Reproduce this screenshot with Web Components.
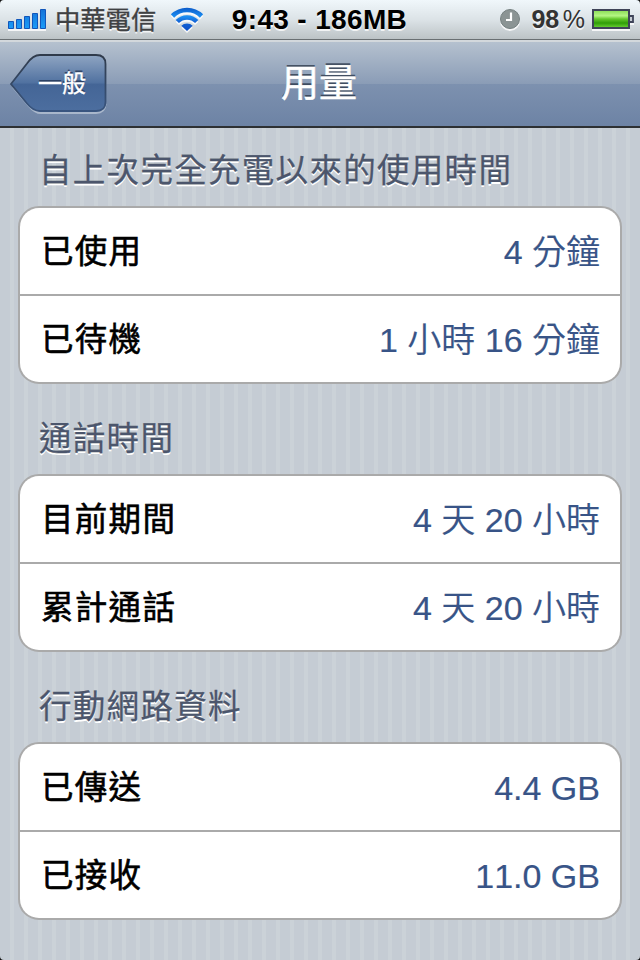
<!DOCTYPE html>
<html lang="zh-Hant">
<head>
<meta charset="utf-8">
<title>用量</title>
<style>
  html, body {
    margin: 0;
    height: 960px;
    overflow: hidden;
  }
  body {
    font-family: "Liberation Sans", "Noto Sans CJK TC", sans-serif;
  }
</style>
</head>
<body>
<usage-screen>
  <status-bar slot="top" carrier="中華電信" time="9:43 - 186MB" battery="98"></status-bar>
  <nav-bar slot="top">
    <back-button slot="back">一般</back-button>
    用量
  </nav-bar>
  <settings-group heading="自上次完全充電以來的使用時間">
    <settings-row label="已使用">4 分鐘</settings-row>
    <settings-row label="已待機">1 小時 16 分鐘</settings-row>
  </settings-group>
  <settings-group heading="通話時間">
    <settings-row label="目前期間">4 天 20 小時</settings-row>
    <settings-row label="累計通話">4 天 20 小時</settings-row>
  </settings-group>
  <settings-group heading="行動網路資料">
    <settings-row label="已傳送">4.4 GB</settings-row>
    <settings-row label="已接收">11.0 GB</settings-row>
  </settings-group>
</usage-screen>

<script>
class UsageScreen extends HTMLElement {
  constructor(){
    super();
    this._root = this.attachShadow({mode: 'open'});
  }

  connectedCallback(){
    this._root.innerHTML = `
    <style>
      :host {
        display: flex;
        flex-direction: column;
        position: relative;
        width: 640px;
        height: 960px;
        overflow: hidden;
        background: repeating-linear-gradient(90deg, #c5ccd4 0 10px, #cbd2d8 10px 14px);
      }
      main {
        display: flex;
        flex-direction: column;
        gap: 12px;
        padding: 0 18px;
      }
      /* rounded screen corners */
      .corners {
        position: absolute;
        inset: 0;
        pointer-events: none;
      }
    </style>
    <slot name="top"></slot>
    <main><slot></slot></main>
    <svg class="corners" width="640" height="960" viewBox="0 0 640 960">
      <path fill="#111" d="M0 0h4Q0 0 0 4zM640 0h-4Q640 0 640 4zM0 960h4Q0 960 0 956zM640 960h-4Q640 960 640 956z"/>
    </svg>`;
  }
}

class StatusBar extends HTMLElement {
  constructor(){
    super();
    this._root = this.attachShadow({mode: 'open'});
  }

  connectedCallback(){
    this._root.innerHTML = `
    <style>
      :host {
        display: grid;
        grid-template-columns: 1fr auto 1fr;
        align-items: center;
        box-sizing: border-box;
        height: 40px;
        padding: 0 6px 0 8px;
        border-bottom: 1px solid #6a7073;
        background: linear-gradient(#f0f7fb, #dce3e7 50%, #bcc3c6);
        text-shadow: 0 2px 0 rgba(255, 255, 255, .75);
        white-space: nowrap;
      }
      .left, .right {
        display: flex;
        align-items: center;
      }
      .right {
        justify-content: flex-end;
      }
      svg {
        display: block;
        flex: none;
      }
      .carrier {
        margin: 0 14px 0 8px;
        font-size: 25.3px;
        line-height: 36px;
        color: #3f4143;
        -webkit-text-stroke: .4px #3f4143;
      }
      .time {
        margin-right: 3px;
        font-size: 28px;
        font-weight: bold;
        letter-spacing: .35px;
        color: #000;
      }
      .battery {
        margin: 0 7px 0 12px;
        font-size: 25px;
        color: #333;
      }
      .battery b {
        margin-right: 4px;
        letter-spacing: -.3px;
      }
    </style>
    <div class="left">
      <svg width="39" height="24" viewBox="0 0 39 24">
        <defs>
          <linearGradient id="bar" x2="0" y2="1">
            <stop offset="0" stop-color="#1673d8"/>
            <stop offset="1" stop-color="#1a9cf8"/>
          </linearGradient>
        </defs>
        <path fill="#fff" opacity=".8" d="M0 21h38v2H0z"/>
        <g fill="url(#bar)" stroke="#1156ba">
          <path d="M.5 13.500h5v7h-5zM8.500 11.500h5v9h-5zM16.500 8.500h5v12h-5zM24.500 5.500h5v15h-5zM32.500 1.500h5v19h-5z"/>
        </g>
      </svg>
      <span class="carrier">${this.getAttribute('carrier')}</span>
      <svg width="34" height="26" viewBox="0 0 34 26">
        <defs>
          <linearGradient id="wifi" gradientUnits="userSpaceOnUse" x1="0" y1="0" x2="0" y2="24">
            <stop offset="0" stop-color="#0b57c6"/>
            <stop offset=".4" stop-color="#1b8ef2"/>
            <stop offset=".6" stop-color="#1467d8"/>
            <stop offset="1" stop-color="#0a4ec6"/>
          </linearGradient>
          <g id="waves">
            <path fill="none" stroke-width="4.600" d="M2.500 9a20.500 20.500 0 0 1 29 0M7.300 14.500a13.700 13.700 0 0 1 19.400 0"/>
            <path stroke="none" d="M11.300 18.800a8 8 0 0 1 11.400 0L17 24z"/>
          </g>
        </defs>
        <use href="#waves" y="2" stroke="#fff" fill="#fff" opacity=".8"/>
        <use href="#waves" stroke="url(#wifi)" fill="url(#wifi)"/>
      </svg>
    </div>
    <div class="time">${this.getAttribute('time')}</div>
    <div class="right">
      <svg width="20" height="22" viewBox="0 0 20 22">
        <circle cx="10" cy="12" r="10" fill="#fff" opacity=".8"/>
        <circle cx="10" cy="10" r="9.500" fill="#8b9494" stroke="#758080"/>
        <path fill="none" stroke="#fff" stroke-width="2.200" d="M11 3.500V11H6"/>
      </svg>
      <span class="battery"><b>${this.getAttribute('battery')}</b>%</span>
      <svg width="42" height="22" viewBox="0 0 42 22">
        <defs>
          <linearGradient id="charge" x2="0" y2="1">
            <stop offset="0" stop-color="#8fe05a"/>
            <stop offset=".3" stop-color="#b4f584"/>
            <stop offset=".5" stop-color="#64c72c"/>
            <stop offset=".75" stop-color="#2f9d08"/>
            <stop offset="1" stop-color="#62cb2e"/>
          </linearGradient>
        </defs>
        <path fill="#fff" opacity=".8" d="M0 20h38v2H0zM38 14h4v2h-4z"/>
        <rect x="1" y="1" width="36" height="18" fill="#a5e67c" stroke="#3e4358" stroke-width="2"/>
        <rect x="2" y="2" width="34" height="16" fill="url(#charge)"/>
        <path fill="#c5cbd2" stroke="#3e4358" stroke-width="1.800" d="M38 7h3v6h-3"/>
      </svg>
    </div>`;
  }
}

class NavBar extends HTMLElement {
  constructor(){
    super();
    this._root = this.attachShadow({mode: 'open'});
  }

  connectedCallback(){
    this._root.innerHTML = `
    <style>
      :host {
        display: grid;
        grid-template-columns: 1fr auto 1fr;
        align-items: center;
        box-sizing: border-box;
        height: 88px;
        padding: 0 10px;
        border-top: 2px solid #d3d8dc;
        border-bottom: 2px solid #2d3033;
        background: linear-gradient(#b5c1cf, #8a9cb6 50%, #7d91af 50%, #6d83a5);
      }
      .title {
        padding: 0 2px 3px 0;
        font-size: 38px;
        line-height: 50px;
        color: #fff;
        text-shadow: 0 -2px 0 rgba(40, 52, 70, .75);
        -webkit-text-stroke: .6px #fff;
      }
    </style>
    <slot name="back"></slot>
    <div class="title"><slot></slot></div>`;
  }
}

class BackButton extends HTMLElement {
  constructor(){
    super();
    this._root = this.attachShadow({mode: 'open'});
  }

  connectedCallback(){
    this._root.innerHTML = `
    <style>
      :host {
        display: grid;
        width: 97px;
        height: 60px;
      }
      svg, span {
        grid-area: 1 / 1;
      }
      span {
        padding-left: 28px;
        font-size: 24px;
        line-height: 60px;
        color: #fff;
        text-shadow: 0 -2px 0 rgba(30, 48, 80, .75);
        -webkit-text-stroke: .4px #fff;
      }
    </style>
    <svg width="97" height="60" viewBox="0 0 97 60">
      <defs>
        <linearGradient id="face" x2="0" y2="1">
          <stop offset="0" stop-color="#8fa5c2"/>
          <stop offset=".5" stop-color="#5071a0"/>
          <stop offset=".52" stop-color="#446596"/>
          <stop offset="1" stop-color="#4c6e9f"/>
        </linearGradient>
        <linearGradient id="edge" x2="0" y2="1">
          <stop offset="0" stop-color="#303b4b"/>
          <stop offset="1" stop-color="#39557f"/>
        </linearGradient>
      </defs>
      <path fill="none" stroke="#a9b7cb" stroke-width="2" d="M3 33L19 52Q25 59 31 59H86Q95 59 95.500 50"/>
      <path fill="url(#face)" stroke="url(#edge)" stroke-width="1.800" d="M1 30L17 9.500Q23 1 30 1H86Q95.500 1 95.500 10V48Q95.500 57 86 57H30Q23 57 17 49.500Z"/>
    </svg>
    <span><slot></slot></span>`;
  }
}

class SettingsGroup extends HTMLElement {
  constructor(){
    super();
    this._root = this.attachShadow({mode: 'open'});
  }

  connectedCallback(){
    this._root.innerHTML = `
    <style>
      :host {
        display: block;
      }
      h2 {
        margin: 0;
        height: 78px;
        padding: 0 0 0 21px;
        font-size: 32.5px;
        font-weight: normal;
        line-height: 86px;
        letter-spacing: 1.3px;
        color: #4c566c;
        text-shadow: 0 2px 0 #fff;
        -webkit-text-stroke: .3px #4c566c;
      }
      .rows {
        display: grid;
        gap: 2px;
        border: 2px solid #aaa;
        border-radius: 21px;
        background: #aaa;
        overflow: hidden;
      }
    </style>
    <h2>${this.getAttribute('heading')}</h2>
    <div class="rows"><slot></slot></div>`;
  }
}

class SettingsRow extends HTMLElement {
  constructor(){
    super();
    this._root = this.attachShadow({mode: 'open'});
  }

  connectedCallback(){
    this._root.innerHTML = `
    <style>
      :host {
        display: flex;
        justify-content: space-between;
        align-items: center;
        box-sizing: border-box;
        height: 86px;
        padding: 2px 20px 0 21px;
        background: #fff;
        line-height: 84px;
      }
      .label {
        font-size: 32.5px;
        letter-spacing: 1.3px;
        color: #000;
        -webkit-text-stroke: .6px #000;
      }
      .value {
        font-size: 34px;
        font-weight: 350;
        font-kerning: none;
        color: #385487;
        -webkit-text-stroke: .2px #385487;
      }
    </style>
    <span class="label">${this.getAttribute('label')}</span>
    <span class="value"><slot></slot></span>`;
  }
}

window.customElements.define('usage-screen', UsageScreen);
window.customElements.define('status-bar', StatusBar);
window.customElements.define('nav-bar', NavBar);
window.customElements.define('back-button', BackButton);
window.customElements.define('settings-group', SettingsGroup);
window.customElements.define('settings-row', SettingsRow);
</script>
</body>
</html>
